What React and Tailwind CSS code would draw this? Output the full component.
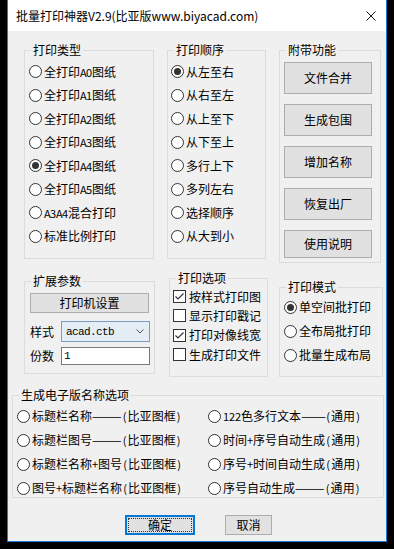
import React from 'react';

const cjk = "font-['Noto_Sans_CJK_SC',sans-serif]";

// SimSun-style label: half-width chars take 6px each
function Txt({ s }) {
    return Array.from(s).map((c, i) =>
        c.charCodeAt(0) < 128
            ? <span key={i} className="inline-block w-[6px] text-center text-[11px]">{c}</span>
            : <span key={i}>{c}</span>
    );
}

function Group({ title, className, children }) {
    return (
        <fieldset className={`border border-[#dcdcdc] shrink-0 ${className}`}>
            <legend className="ml-[6px] px-[2px] text-[12px] leading-[16px]">{title}</legend>
            {children}
        </fieldset>
    );
}

function Radio({ checked, label, className = 'h-[23.5px]' }) {
    return (
        <div className={`flex items-center gap-[2px] text-[12px] leading-[14px] whitespace-nowrap ${className}`}>
            <span className="w-[13px] h-[13px] rounded-full border border-[#333333] bg-white flex items-center justify-center shrink-0">
                {checked && <span className="w-[7px] h-[7px] rounded-full bg-[#333333]" />}
            </span>
            <span className="flex items-center">{typeof label === 'string' ? <Txt s={label} /> : label}</span>
        </div>
    );
}

function Check({ checked, label }) {
    return (
        <div className="flex items-center gap-[3px] h-[19.3px] text-[12px] leading-[14px] whitespace-nowrap">
            <span className="w-[13px] h-[13px] border border-[#333333] bg-white shrink-0 flex items-center justify-center">
                {checked && (
                    <svg width="11" height="11" viewBox="0 0 11 11">
                        <polyline points="1.5,5.5 4,8 9.5,2.5" fill="none" stroke="#333333" strokeWidth="1.2" />
                    </svg>
                )}
            </span>
            <span>{label}</span>
        </div>
    );
}

function Btn({ children, className }) {
    return (
        <div className={`bg-[#e1e1e1] border border-[#adadad] flex items-center justify-center text-[12px] leading-[14px] shrink-0 ${className}`}>
            {children}
        </div>
    );
}

export default function App() {
    const types = ['全打印A0图纸', '全打印A1图纸', '全打印A2图纸', '全打印A3图纸', '全打印A4图纸', '全打印A5图纸', 'A3A4混合打印', '标准比例打印'];
    const orders = ['从左至右', '从右至左', '从上至下', '从下至上', '多行上下', '多列左右', '选择顺序', '从大到小'];
    const tools = ['文件合并', '生成包围', '增加名称', '恢复出厂'];

    return (
        <div className={`min-h-[549px] bg-black pl-[7px] text-black ${cjk}`}>
            <div className="w-[380px] h-[542px] bg-[#f0f0f0] border-x border-b border-[#1a7fd4] flex flex-col">
                <div className="h-[31px] bg-white flex items-center justify-between pl-[8px] pr-[10px] shrink-0">
                    <span className="text-[12px] leading-[16px]">批量打印神器V2.9(比亚版www.biyacad.com)</span>
                    <svg width="10" height="10" viewBox="0 0 10 10">
                        <path d="M0.5 0.5 L9.5 9.5 M9.5 0.5 L0.5 9.5" stroke="#111" strokeWidth="1" />
                    </svg>
                </div>

                <div className="flex-1">
                    <div className="flex items-start pl-[16px] pt-[11px]">
                        <Group title="打印类型" className="w-[130px] h-[217px]">
                            <div className="pl-[4px] pt-[2px]">
                                {types.map((t, i) => <Radio key={t} label={t} checked={i === 4} />)}
                            </div>
                        </Group>
                        <Group title="打印顺序" className="ml-[13px] w-[99px] h-[217px]">
                            <div className="pl-[3px] pt-[2px]">
                                {orders.map((t, i) => <Radio key={t} label={t} checked={i === 0} />)}
                            </div>
                        </Group>
                        <Group title="附带功能" className="ml-[13px] w-[102px] h-[221px]">
                            <div className="pl-[4px] pt-[4px] flex flex-col gap-[10px]">
                                {tools.map(t => <Btn key={t} className="w-[88px] h-[32px]">{t}</Btn>)}
                                <Btn className="w-[88px] h-[28px]">使用说明</Btn>
                            </div>
                        </Group>
                    </div>

                    <div className="flex items-start pl-[16px] mt-[7px]">
                        <Group title="扩展参数" className="mt-[3px] w-[130px] h-[101px]">
                            <div className="pl-[5px] pr-[4px]">
                                <Btn className="mt-[4px] h-[20px] w-[119px]">打印机设置</Btn>
                                <div className="flex items-center mt-[8px]">
                                    <span className="w-[31px] text-[12px] leading-[14px]">样式</span>
                                    <div className="w-[89px] h-[21px] border border-[#7a9cc6] bg-[#e5edf5] flex items-center justify-between pl-[4px] pr-[5px]">
                                        <span className="font-['Liberation_Mono',monospace] text-[11px] tracking-[-0.6px] leading-[12px]">acad.ctb</span>
                                        <svg width="8" height="5" viewBox="0 0 8 5">
                                            <polyline points="0.5,0.5 4,4 7.5,0.5" fill="none" stroke="#555" strokeWidth="1" />
                                        </svg>
                                    </div>
                                </div>
                                <div className="flex items-center mt-[5px]">
                                    <span className="w-[31px] text-[12px] leading-[14px]">份数</span>
                                    <div className="w-[89px] h-[18px] border border-[#7a7a7a] bg-white flex items-center pl-[2px]">
                                        <span className="font-['Liberation_Mono',monospace] text-[11px] leading-[12px]">1</span>
                                    </div>
                                </div>
                            </div>
                        </Group>
                        <Group title="打印选项" className="ml-[14px] w-[99px] h-[107px]">
                            <div className="pl-[3px] pt-[1px]">
                                <Check label="按样式打印图" checked />
                                <Check label="显示打印戳记" />
                                <Check label="打印对像线宽" checked />
                                <Check label="生成打印文件" />
                            </div>
                        </Group>
                        <Group title="打印模式" className="mt-[9px] ml-[11px] w-[104px] h-[98px]">
                            <div className="pl-[4px]">
                                <Radio label="单空间批打印" checked className="h-[24px]" />
                                <Radio label="全布局批打印" className="h-[24px]" />
                                <Radio label="批量生成布局" className="h-[24px]" />
                            </div>
                        </Group>
                    </div>

                    <Group title="生成电子版名称选项" className="mt-[10px] ml-[4px] w-[372px] h-[111px]">
                        <div className="grid grid-cols-[191px_1fr] pl-[4px] pt-[1px]">
                            <Radio className="h-[24px]" label={<><Txt s="标题栏名称" /><span>———</span><Txt s="(比亚图框)" /></>} />
                            <Radio className="h-[24px]" label={<><Txt s="122色多行文本" /><span className="inline-block w-[24px]"><span className="inline-block origin-left [transform:scaleX(1.25)]">——</span></span><Txt s="(通用)" /></>} />
                            <Radio className="h-[24px]" label={<><Txt s="标题栏图号" /><span>———</span><Txt s="(比亚图框)" /></>} />
                            <Radio className="h-[24px]" label="时间+序号自动生成(通用)" />
                            <Radio className="h-[24px]" label="标题栏名称+图号(比亚图框)" />
                            <Radio className="h-[24px]" label="序号+时间自动生成(通用)" />
                            <Radio className="h-[24px]" label="图号+标题栏名称(比亚图框)" />
                            <Radio className="h-[24px]" label={<><Txt s="序号自动生成" /><span>———</span><Txt s="(通用)" /></>} />
                        </div>
                    </Group>

                    <div className="flex mt-[17px] pl-[117px]">
                        <div className="w-[70px] h-[20px] border-2 border-[#0078d7] bg-[#e1e1e1] p-[1px]">
                            <div className="h-full border border-dotted border-[#333] flex items-center justify-center text-[12px] leading-[14px]">确定</div>
                        </div>
                        <Btn className="ml-[30px] w-[47px] h-[20px]">取消</Btn>
                    </div>
                </div>
            </div>
        </div>
    );
}
